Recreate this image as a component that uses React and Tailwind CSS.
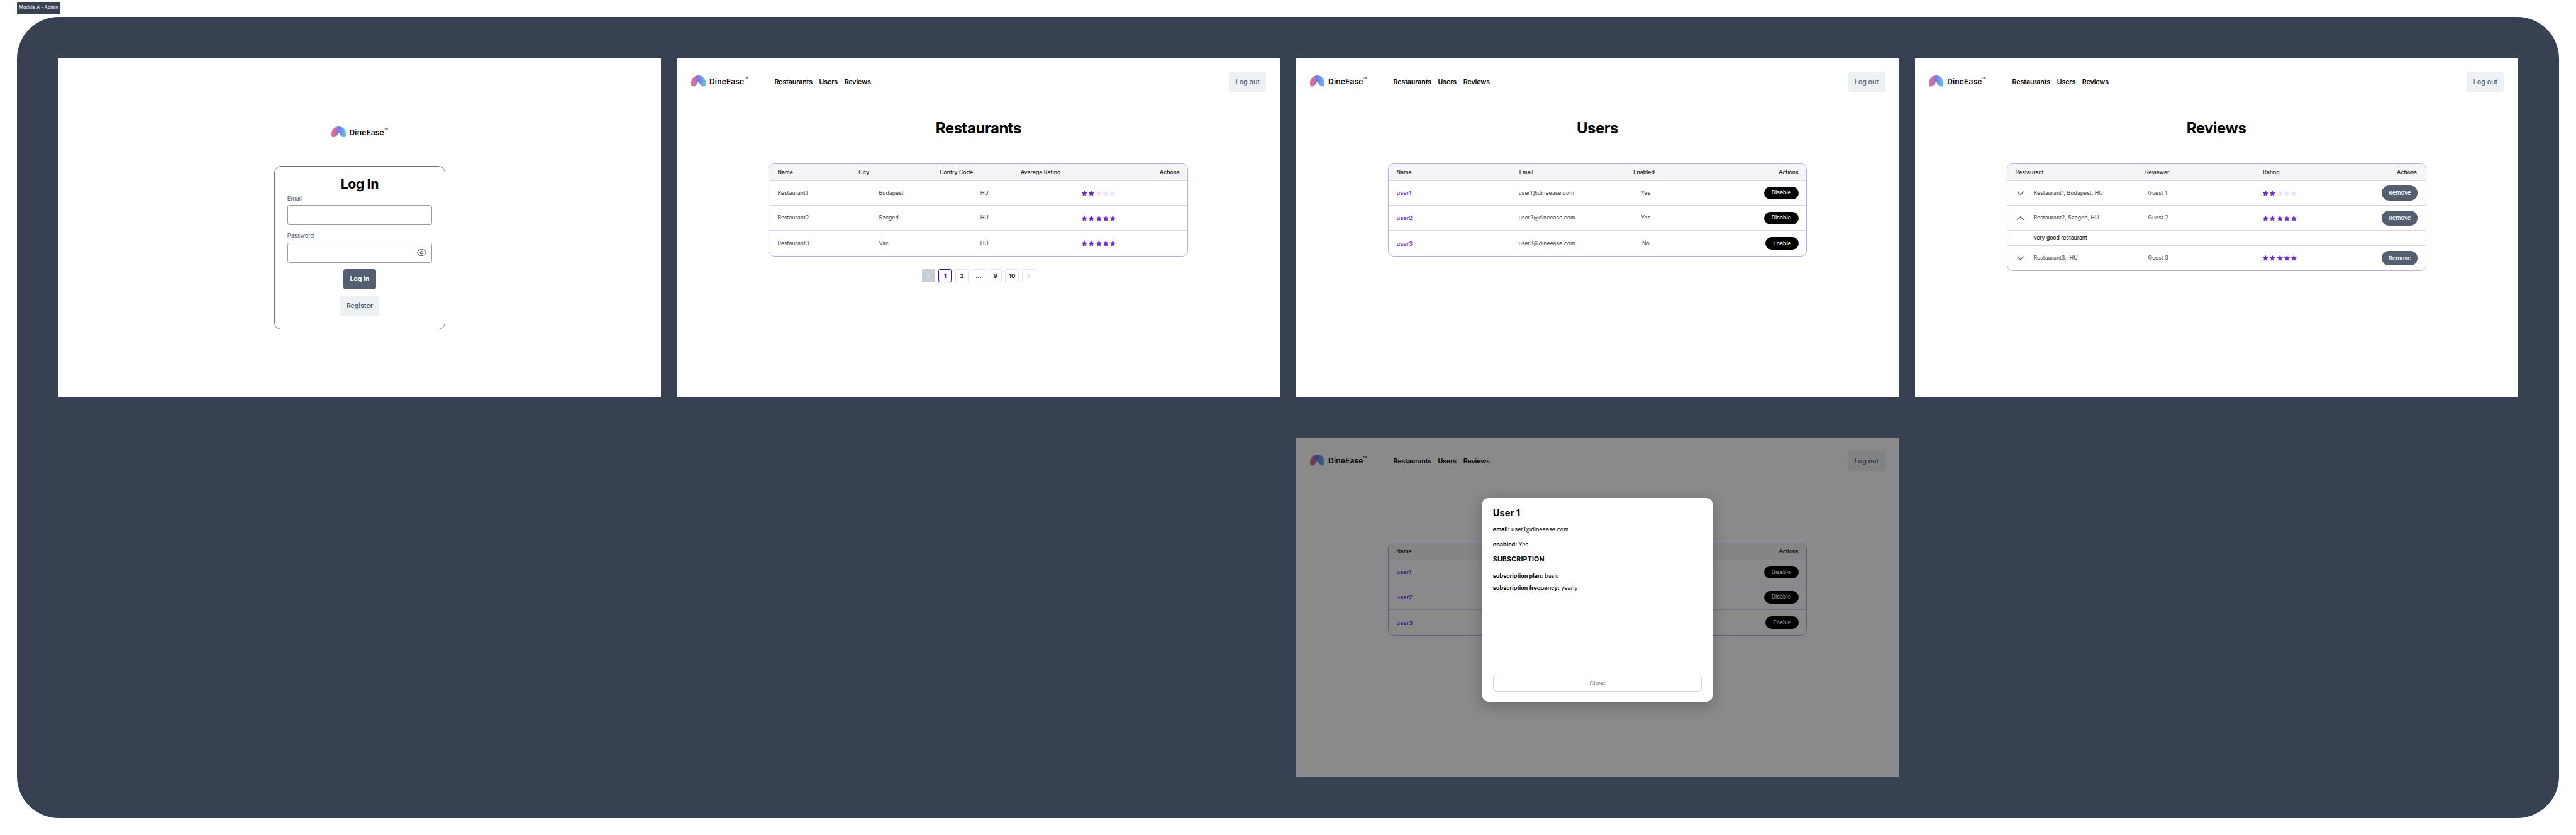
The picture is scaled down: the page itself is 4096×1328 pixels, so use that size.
import React from "react";

function LogoMark() {
  return (
    <svg width="35" height="26.4" viewBox="0 0 35 26.4" className="shrink-0">
      <defs>
        <linearGradient id="dine-ease-arch" x1="0" y1="0" x2="1" y2="0">
          <stop offset="0" stopColor="#fa6b80" />
          <stop offset="0.18" stopColor="#d66fa2" />
          <stop offset="0.5" stopColor="#7776f0" />
          <stop offset="0.72" stopColor="#6c9ce6" />
          <stop offset="1" stopColor="#5fcbd6" />
        </linearGradient>
      </defs>
      <path
        fill="url(#dine-ease-arch)"
        d="M17.5 0C27.4 0 35 7.9 35 17.6C35 20 34.9 22.2 34.2 24C33.4 26 31.6 26.4 29.8 26.3C26.9 26.1 25 24.7 23.2 22.6L20.4 19.8C19.7 19.1 19.5 18.3 19.5 17.2C19.5 15.8 18.9 15.2 17.5 15.2C16.1 15.2 15.5 15.8 15.5 17.2C15.5 18.3 15.3 19.1 14.6 19.8L11.8 22.6C10 24.7 8.1 26.1 5.2 26.3C3.4 26.4 1.6 26 0.8 24C0.1 22.2 0 20 0 17.6C0 7.9 7.6 0 17.5 0Z"
      />
    </svg>
  );
}

function Logo() {
  return (
    <div className="flex h-[26.4px] w-[136px] items-start text-black">
      <LogoMark />
      <span className="ml-[8.5px] pt-[3px] text-[18px] leading-[24px] font-semibold tracking-[0.27px]">
        DineEase
      </span>
      <span className="mt-[3.5px] text-[5.7px] leading-[6px] font-medium">TM</span>
    </div>
  );
}

function Header() {
  return (
    <header className="flex h-[80px] items-start pt-[32px] pr-[32px] pl-[33px]">
      <div className="mt-[8.7px]">
        <Logo />
      </div>
      <nav className="ml-[63px] flex h-[49px] items-center gap-[16px] text-[16px] font-semibold tracking-[-0.15px] text-black">
        <span>Restaurants</span>
        <span>Users</span>
        <span>Reviews</span>
      </nav>
      <button className="ml-auto flex h-[48px] w-[89px] items-center justify-center rounded-[6px] bg-[#edf1f4] pt-px text-[16px] font-medium text-[#535e71]">
        Log out
      </button>
    </header>
  );
}

function Screen({ title, children, overlay }) {
  return (
    <section className="relative h-[810px] w-[1440px] shrink-0 bg-white">
      <Header />
      <h1 className="mt-[65px] text-center text-[36px] leading-[44px] font-bold tracking-[-0.65px] text-black">
        {title}
      </h1>
      {children}
      {overlay}
    </section>
  );
}

function Table({ children }) {
  return (
    <div className="mx-auto mt-[62px] w-[1003px] overflow-hidden rounded-[14px] border-2 border-[#b9a7fd] bg-white text-[13px] tracking-[0.1px]">
      {children}
    </div>
  );
}

function HeadRow({ children }) {
  return (
    <div className="flex h-[40px] items-center border-b border-[#dccffb] bg-[#f5f5f5] pt-px pr-[19px] pl-[19.5px] font-medium text-[#18181b]">
      {children}
    </div>
  );
}

function Row({ children, last }) {
  return (
    <div
      className={
        last
          ? "flex h-[60px] items-center pr-[19px] pl-[19.5px] text-[#3f3f46]"
          : "flex h-[60px] items-center border-b border-[#dccffb] pr-[19px] pl-[19.5px] text-[#3f3f46]"
      }
    >
      {children}
    </div>
  );
}

function Stars({ value }) {
  return (
    <div className="flex gap-[1px]">
      {[1, 2, 3, 4, 5].map((n) => (
        <svg key={n} width="16" height="16" viewBox="0 0 24 24" strokeLinejoin="round" strokeWidth="1.4" className={n <= value ? "fill-[#6d28d9] stroke-[#6d28d9]" : "fill-[#ede4ff] stroke-[#ede4ff]"}>
          <path d="M12 2.8L14.9 8.7L21.4 9.6L16.7 14.2L17.8 20.7L12 17.6L6.2 20.7L7.3 14.2L2.6 9.6L9.1 8.7Z" />
        </svg>
      ))}
    </div>
  );
}

function PageArrow({ d, className }) {
  return (
    <svg width="16" height="16" viewBox="0 0 16 16" fill="none" strokeWidth="1.8" className={className}>
      <path d={d} />
    </svg>
  );
}

function Pagination() {
  const box = "flex size-[32px] items-center justify-center rounded-[4px] border border-[#dfe3e8] bg-white text-[14px] font-bold text-[#212b36]";
  return (
    <div className="mt-[30px] flex justify-center gap-[8px]">
      <div className="flex size-[32px] items-center justify-center rounded-[4px] bg-[#c7ced5]">
        <PageArrow d="M10.5 2.5L5 8L10.5 13.5" className="stroke-[#e6eaed]" />
      </div>
      <div className="flex size-[32px] items-center justify-center rounded-[4px] border border-[#4200ff] bg-white text-[14px] font-bold text-[#4200ff]">
        1
      </div>
      <div className={box}>2</div>
      <div className={box}>...</div>
      <div className={box}>9</div>
      <div className={box}>10</div>
      <div className={box}>
        <PageArrow d="M5.5 2.5L11 8L5.5 13.5" className="stroke-[#c4cdd5]" />
      </div>
    </div>
  );
}

function LoginScreen() {
  return (
    <section className="flex h-[810px] w-[1440px] shrink-0 flex-col items-center bg-white pt-[22px]">
      <div className="mt-[140px]">
        <Logo />
      </div>
      <div className="mt-[69px] flex h-[391px] w-[410px] flex-col items-center rounded-[16px] border-[1.6px] border-[#707070] px-[30.6px] pt-[20.4px] text-[#535e71]">
        <h1 className="text-[32px] leading-[40px] font-bold tracking-[-0.6px] text-black">Log In</h1>
        <label className="mt-[5px] w-full text-[14px] leading-[20px] tracking-[-0.15px]">Email</label>
        <div className="mt-[6px] h-[48px] w-full rounded-[5px] border-[1.6px] border-[#979eab]" />
        <label className="mt-[16px] w-full text-[14px] leading-[20px] tracking-[-0.15px]">Password</label>
        <div className="mt-[6px] flex h-[48px] w-full items-center justify-end rounded-[5px] border-[1.6px] border-[#979eab] pr-[12.5px]">
          <svg width="22" height="17" viewBox="0 0 22 17" fill="none" strokeWidth="1.7" className="stroke-[#535e71]">
            <path d="M11 1C6.8 1 3.6 3.2 1.6 6.4C0.7 7.9 0.7 9.1 1.6 10.6C3.6 13.8 6.8 16 11 16C15.2 16 18.4 13.8 20.4 10.6C21.3 9.1 21.3 7.9 20.4 6.4C18.4 3.2 15.2 1 11 1Z" />
            <circle cx="11" cy="8.5" r="3.3" />
          </svg>
        </div>
        <button className="mt-[16px] h-[48px] w-[78px] rounded-[6px] bg-[#535e71] text-[16px] font-semibold tracking-[-0.1px] text-white">Log In</button>
        <button className="mt-[16px] h-[48px] w-[94px] rounded-[6px] bg-[#edf1f4] text-[16px] font-semibold tracking-[-0.1px] text-[#535e71]">Register</button>
      </div>
    </section>
  );
}

function RestaurantsScreen() {
  const rows = [
    ["Restaurant1", "Budapest", 2],
    ["Restaurant2", "Szeged", 5],
    ["Restaurant3", "Vác", 5],
  ];
  return (
    <Screen title="Restaurants">
      <Table>
        <HeadRow>
          <div className="w-[193.8px]">Name</div>
          <div className="w-[193.8px]">City</div>
          <div className="w-[193.8px]">Contry Code</div>
          <div>Average Rating</div>
          <div className="ml-auto">Actions</div>
        </HeadRow>
        {rows.map(([name, city, rating], i) => (
          <Row key={name} last={i === 2}>
            <div className="w-[242.4px]">{name}</div>
            <div className="w-[242.4px]">{city}</div>
            <div className="w-[241px]">HU</div>
            <Stars value={rating} />
          </Row>
        ))}
      </Table>
      <Pagination />
    </Screen>
  );
}

function UsersScreen({ overlay }) {
  const rows = [
    ["user1", "Yes", "Disable"],
    ["user2", "Yes", "Disable"],
    ["user3", "No", "Enable"],
  ];
  return (
    <Screen title="Users" overlay={overlay}>
      <Table>
        <HeadRow>
          <div className="w-[293.5px]">Name</div>
          <div className="w-[273px]">Email</div>
          <div>Enabled</div>
          <div className="ml-auto">Actions</div>
        </HeadRow>
        {rows.map(([name, enabled, action], i) => (
          <Row key={name} last={i === 2}>
            <div className="w-[292px] text-[13.5px] font-bold text-[#7c3aed]">{name}</div>
            <div className="w-[274px]">{name}@dineease.com</div>
            <div className="w-[60px] text-center">{enabled}</div>
            <button className="ml-auto h-[30px] rounded-full bg-black px-[18px] font-medium tracking-[0.15px] text-white">
              {action}
            </button>
          </Row>
        ))}
      </Table>
    </Screen>
  );
}

function ReviewRow({ open, place, guest, rating, last }) {
  return (
    <Row last={last}>
      <div className="w-[43.5px] pl-[3.5px]">
        <svg width="17" height="10" viewBox="0 0 17 10" fill="none" strokeWidth="2" className="stroke-[#535e71]">
          <path d={open ? "M0.8 9L8.5 1.4L16.2 9" : "M0.8 1L8.5 8.6L16.2 1"} />
        </svg>
      </div>
      <div className="w-[273.5px] whitespace-pre">{place}</div>
      <div className="w-[273.3px]">{guest}</div>
      <Stars value={rating} />
      <button className="ml-auto h-[36px] w-[85px] rounded-full bg-[#535e71] text-[14px] font-medium tracking-normal text-white">
        Remove
      </button>
    </Row>
  );
}

function ReviewsScreen() {
  return (
    <Screen title="Reviews">
      <Table>
        <HeadRow>
          <div className="w-[310.5px]">Restaurant</div>
          <div className="w-[281.3px]">Reviewer</div>
          <div>Rating</div>
          <div className="ml-auto pr-[1.5px]">Actions</div>
        </HeadRow>
        <ReviewRow place="Restaurant1, Budapest, HU" guest="Guest 1" rating={2} />
        <ReviewRow open place="Restaurant2, Szeged, HU" guest="Guest 2" rating={5} />
        <div className="flex h-[35px] items-center border-b border-[#dccffb] pl-[63px] tracking-normal text-black">
          very good restaurant
        </div>
        <ReviewRow last place="Restaurant3,  HU" guest="Guest 3" rating={5} />
      </Table>
    </Screen>
  );
}

function UserModal() {
  return (
    <div className="absolute inset-0 bg-black/46 pt-[144px]">
      <div className="mx-auto flex h-[488px] w-[549px] flex-col rounded-[14px] bg-white px-[24.5px] pt-[22.5px] pb-[24px] text-[13.5px] leading-[20px] tracking-[0.05px] text-black shadow-[0_8px_36px_rgba(0,0,0,0.25)]">
        <h2 className="text-[22px] leading-[28px] font-bold tracking-normal">User 1</h2>
        <p className="mt-[14px]"><b>email:</b> user1@dineease.com</p>
        <p className="mt-[17px]"><b>enabled:</b> Yes</p>
        <h3 className="mt-[16px] text-[16px] leading-[20px] font-bold tracking-[0.27px]">SUBSCRIPTION</h3>
        <p className="mt-[18px]"><b>subscription plan:</b> basic</p>
        <p className="mt-[9px]"><b>subscription frequency:</b> yearly</p>
        <button className="mt-auto h-[42px] w-full rounded-[8px] border border-[#d3d2e2] text-[14px] font-semibold text-[#8e8e90]">
          Close
        </button>
      </div>
    </div>
  );
}

export default function App() {
  return (
    <div className="h-[1328px] w-[4096px] overflow-hidden bg-white">
      <div className="h-[1997px] w-[6160px] px-[40px] pt-[4px] font-[Inter,sans-serif] [zoom:0.66494]">
        <div className="flex h-[30px] w-[105px] items-center justify-center rounded-[2px] bg-[#374151] text-[11px] whitespace-nowrap text-white">
          Module A - Admin
        </div>
        <main className="mt-[6px] flex h-[1917px] gap-[40px] rounded-[100px] bg-[#374151] p-[100px]">
          <LoginScreen />
          <RestaurantsScreen />
          <div className="flex flex-col gap-[97px]">
            <UsersScreen />
            <UsersScreen overlay={<UserModal />} />
          </div>
          <ReviewsScreen />
        </main>
      </div>
    </div>
  );
}
